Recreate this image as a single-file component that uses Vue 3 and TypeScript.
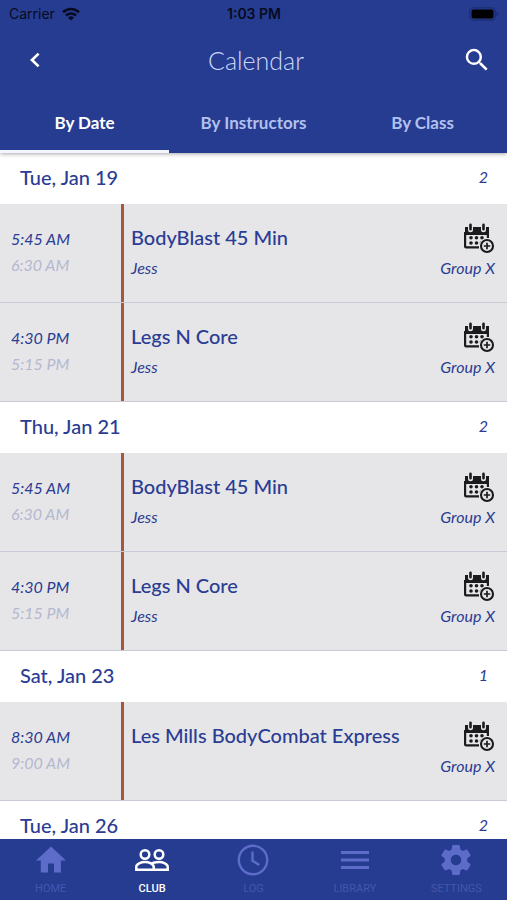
<script setup lang="ts">
import { ref } from 'vue'

interface Session {
  start: string
  end: string
  title: string
  instructor: string
  group: string
}

interface Day {
  label: string
  count: number
  sessions: Session[]
}

const tabs = ['By Date', 'By Instructors', 'By Class']
const activeTab = ref('By Date')

const morning: Session = { start: '5:45 AM', end: '6:30 AM', title: 'BodyBlast 45 Min', instructor: 'Jess', group: 'Group X' }
const evening: Session = { start: '4:30 PM', end: '5:15 PM', title: 'Legs N Core', instructor: 'Jess', group: 'Group X' }
const saturday: Session = { start: '8:30 AM', end: '9:00 AM', title: 'Les Mills BodyCombat Express', instructor: '', group: 'Group X' }

const days: Day[] = [
  { label: 'Tue, Jan 19', count: 2, sessions: [morning, evening] },
  { label: 'Thu, Jan 21', count: 2, sessions: [morning, evening] },
  { label: 'Sat, Jan 23', count: 1, sessions: [saturday] },
  { label: 'Tue, Jan 26', count: 2, sessions: [] },
]

const navItems = ['HOME', 'CLUB', 'LOG', 'LIBRARY', 'SETTINGS']
const activeNav = 'CLUB'
</script>

<template>
  <div class="app">
    <header class="top">
      <div class="status">
        <div class="carrier">
          <span>Carrier</span>
          <svg width="18" height="14" viewBox="0 0 18 14" aria-hidden="true">
            <g fill="none" stroke="#060b22" stroke-width="2.6">
              <path d="M1 5.2a11.6 11.6 0 0 1 16 0" />
              <path d="M4 8.5a7.3 7.3 0 0 1 10 0" />
            </g>
            <path d="M9 13.6 6 10.7a4.3 4.3 0 0 1 6 0z" fill="#060b22" />
          </svg>
        </div>
        <span class="clock">1:03 PM</span>
        <div class="battery">
          <svg width="30" height="14" viewBox="0 0 30 14" aria-hidden="true">
            <rect x="0.8" y="0.8" width="25.4" height="12.4" rx="3.6" fill="none" stroke="#1b2c70" stroke-width="1.2" />
            <rect x="2.5" y="2.5" width="22" height="9" rx="2" fill="#000" />
            <path d="M27.6 4.8q2 .6 2 2.2t-2 2.2z" fill="#1b2c70" />
          </svg>
        </div>
      </div>

      <div class="titlebar">
        <button type="button" class="icon-button" aria-label="Back">
          <svg width="12" height="18" viewBox="0 0 12 18" aria-hidden="true">
            <path d="M9.6 2.6 3 9l6.6 6.4" fill="none" stroke="#fff" stroke-width="2.7" />
          </svg>
        </button>
        <h1>Calendar</h1>
        <button type="button" class="icon-button" aria-label="Search">
          <svg width="30" height="30" viewBox="0 0 24 24" aria-hidden="true">
            <path fill="#fff" d="M15.5 14h-.79l-.28-.27A6.47 6.47 0 0 0 16 9.5 6.5 6.5 0 1 0 9.5 16c1.61 0 3.09-.59 4.23-1.57l.27.28v.79l5 4.99L20.49 19l-4.99-5zm-6 0C7.01 14 5 11.99 5 9.5S7.01 5 9.5 5 14 7.01 14 9.5 11.99 14 9.5 14z" />
          </svg>
        </button>
      </div>

      <div class="tabs" role="tablist">
        <button
          v-for="tab in tabs"
          :key="tab"
          type="button"
          role="tab"
          class="tab"
          :class="{ active: tab === activeTab }"
          :aria-selected="tab === activeTab"
          @click="activeTab = tab"
        >
          {{ tab }}
        </button>
      </div>
    </header>

    <main class="schedule">
      <section v-for="day in days" :key="day.label">
        <div class="day">
          <h2>{{ day.label }}</h2>
          <span class="count">{{ day.count }}</span>
        </div>
        <article v-for="session in day.sessions" :key="session.start" class="session">
          <div class="times">
            <span>{{ session.start }}</span>
            <span class="end">{{ session.end }}</span>
          </div>
          <div class="details">
            <h3>{{ session.title }}</h3>
            <p>{{ session.instructor }}</p>
          </div>
          <div class="side">
            <button type="button" class="icon-button" aria-label="Add to calendar">
              <svg width="32" height="32" viewBox="0 0 32 32" aria-hidden="true">
                <path d="M2 5h24v8H2z" fill="#1b1b1d" />
                <path d="M2.1 10v14.400q0 1 1 1H16M24.900 10v6" fill="none" stroke="#1b1b1d" stroke-width="2.200" />
                <path d="M7.500 2v5.800M20.500 2v5.800" stroke="#e6e6e8" stroke-width="5" stroke-linecap="round" />
                <path d="M7.500 2.700v4.600M20.500 2.700v4.600" stroke="#1b1b1d" stroke-width="2.600" stroke-linecap="round" />
                <g fill="#1b1b1d">
                  <circle cx="8" cy="15.800" r="1.800" /><circle cx="13.500" cy="15.800" r="1.800" /><circle cx="19" cy="15.800" r="1.800" />
                  <circle cx="8" cy="21" r="1.800" /><circle cx="13.500" cy="21" r="1.800" /><circle cx="18.500" cy="21" r="1.800" />
                </g>
                <circle cx="24" cy="24" r="7.800" fill="#e6e6e8" />
                <circle cx="24" cy="24" r="6" fill="none" stroke="#1b1b1d" stroke-width="2.100" />
                <path d="M24 20.800v6.400M20.800 24h6.400" stroke="#1b1b1d" stroke-width="1.700" />
              </svg>
            </button>
            <span>{{ session.group }}</span>
          </div>
        </article>
      </section>
    </main>

    <nav class="bottom">
      <a v-for="item in navItems" :key="item" href="#" :class="{ active: item === activeNav }">
        <svg v-if="item === 'HOME'" width="36" height="36" viewBox="0 0 24 24" aria-hidden="true">
          <path fill="currentColor" d="M10 20.3v-6h4v6h4.6v-8H22L12 3 2 12.300h3.200v8z" />
        </svg>
        <svg v-else-if="item === 'CLUB'" width="36" height="36" viewBox="0 0 36 36" aria-hidden="true">
          <g fill="none" stroke="currentColor" stroke-width="2.5">
            <circle cx="11" cy="12.500" r="4.300" />
            <circle cx="25" cy="12.500" r="4.300" />
            <path d="M2.300 27.800v-3c0-3 4.700-4.800 8.700-4.800s8.700 1.800 8.700 4.800v3zM17 21.700c2-1.100 5-1.700 8-1.700 4 0 8.700 1.800 8.700 4.800v3H19.500" />
          </g>
        </svg>
        <svg v-else-if="item === 'LOG'" width="36" height="36" viewBox="0 0 36 36" aria-hidden="true">
          <g fill="none" stroke="currentColor" stroke-width="2.400">
            <circle cx="18" cy="18" r="14.200" />
            <path d="M17.500 9.500V18.800l6.800 4.200" />
          </g>
        </svg>
        <svg v-else-if="item === 'LIBRARY'" width="36" height="36" viewBox="0 0 36 36" aria-hidden="true">
          <path d="M4 10.500h28M4 18h28M4 25.500h28" stroke="currentColor" stroke-width="2.800" />
        </svg>
        <svg v-else width="36" height="36" viewBox="0 0 24 24" aria-hidden="true">
          <path fill="currentColor" d="M19.430 12.980c.04-.32.07-.64.07-.98s-.03-.66-.07-.98l2.110-1.650c.19-.15.24-.42.12-.64l-2-3.460c-.12-.22-.39-.3-.61-.22l-2.490 1c-.52-.4-1.080-.73-1.690-.98l-.38-2.650C14.460 2.180 14.250 2 14 2h-4c-.25 0-.46.18-.49.42l-.38 2.650c-.61.25-1.170.59-1.690.98l-2.490-1c-.23-.09-.49 0-.61.22l-2 3.460c-.13.22-.07.49.12.64l2.110 1.650c-.04.32-.07.65-.07.98s.03.66.07.98l-2.110 1.650c-.19.15-.24.42-.12.64l2 3.460c.12.22.39.3.61.22l2.490-1c.52.4 1.080.73 1.690.98l.38 2.650c.03.24.24.42.49.42h4c.25 0 .46-.18.49-.42l.38-2.650c.61-.25 1.170-.59 1.690-.98l2.490 1c.23.09.49 0 .61-.22l2-3.460c.12-.22.07-.49-.12-.64l-2.110-1.650zM12 15.500c-1.930 0-3.500-1.570-3.500-3.500s1.570-3.500 3.500-3.500 3.500 1.570 3.500 3.500-1.570 3.500-3.500 3.500z" />
        </svg>
        <span>{{ item }}</span>
      </a>
    </nav>
  </div>
</template>

<style>
body {
  margin: 0;
}
</style>

<style scoped>
.app {
  display: flex;
  flex-direction: column;
  height: 100vh;
  background: #fff;
  color: #2a3c93;
  font-family: Lato, "Liberation Sans", sans-serif;
}

button {
  padding: 0;
  border: 0;
  background: none;
  font-family: inherit;
  cursor: pointer;
}

h1,
h2,
h3,
p {
  margin: 0;
}

svg {
  display: block;
}

.top {
  position: relative;
  background: #263c91;
  box-shadow: 0 1px 4px rgba(0, 0, 0, 0.35);
}

.status {
  display: grid;
  grid-template-columns: 1fr auto 1fr;
  align-items: center;
  height: 27px;
  padding: 0 8px 0 9px;
  color: #060b22;
  font-family: Inter, "Liberation Sans", sans-serif;
  font-size: 14px;
}

.carrier {
  display: flex;
  align-items: center;
  gap: 7px;
}

.clock {
  font-weight: 600;
}

.battery {
  justify-self: end;
}

.titlebar {
  display: grid;
  grid-template-columns: 40px 1fr 40px;
  align-items: center;
  height: 65px;
  padding: 0 10px 0 15px;
}

.titlebar .icon-button {
  display: grid;
  place-items: center;
  height: 40px;
}

h1 {
  color: #cbd8fb;
  font-size: 25px;
  font-weight: 300;
  text-align: center;
}

.tabs {
  display: grid;
  grid-template-columns: repeat(3, 1fr);
  height: 61px;
}

.tab {
  padding-top: 2px;
  border-bottom: 3px solid transparent;
  color: #b2c0ee;
  font-size: 17px;
  font-weight: 700;
}

.tab.active {
  border-bottom-color: #f4f6ff;
  color: #fff;
}

.schedule {
  flex: 1;
  min-height: 0;
  overflow-y: auto;
  scrollbar-width: none;
}

.day {
  display: flex;
  align-items: center;
  justify-content: space-between;
  height: 48px;
  padding: 0 19px 3px 20px;
}

h2,
h3 {
  font-size: 20px;
  font-weight: 500;
  line-height: 26px;
}

.count,
.times,
.side,
p {
  font-size: 16px;
  font-style: italic;
  line-height: 20px;
}

.session {
  display: grid;
  grid-template-columns: 121px 1fr auto;
  height: 98px;
  border-bottom: 1px solid #c9cad6;
  background: #e6e6e8;
}

.times {
  display: flex;
  flex-direction: column;
  gap: 6px;
  padding: 25px 0 0 11px;
}

.end {
  color: #b4b8d0;
}

.details {
  padding: 20px 0 0 7px;
  border-left: 3px solid #a7573b;
}

.details p {
  padding-top: 8px;
}

.side {
  display: flex;
  flex-direction: column;
  align-items: flex-end;
  gap: 5px;
  padding: 18px 12px 0 0;
}

.side .icon-button {
  height: 31px;
}

.bottom {
  display: grid;
  grid-template-columns: repeat(5, 1fr);
  height: 61px;
  background: #263c91;
}

.bottom a {
  display: flex;
  flex-direction: column;
  align-items: center;
  gap: 4px;
  padding-top: 3px;
  color: #5c6cc8;
  font-family: Roboto, "Liberation Sans", sans-serif;
  font-size: 11px;
  line-height: 14px;
  text-decoration: none;
}

.bottom span {
  color: #4356ad;
}

.bottom .active,
.bottom .active span {
  color: #fff;
}

.bottom .active span {
  font-weight: 500;
}
</style>
